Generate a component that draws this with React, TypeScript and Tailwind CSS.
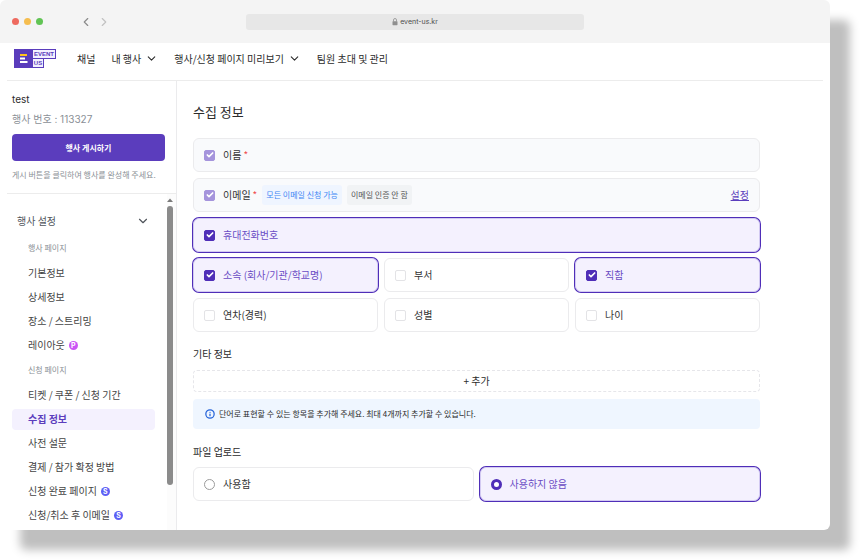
import { ReactElement, ReactNode } from 'react';
import { Check, ChevronDown, ChevronLeft, ChevronRight, Info } from 'lucide-react';

interface IMenuItem {
  name: string;
  badge?: 'P' | 'S';
  active?: boolean;
}

interface IMenuGroup {
  title: string;
  items: IMenuItem[];
}

interface IField {
  name: string;
  checked: boolean;
}

const menuGroups: IMenuGroup[] = [
  {
    title: '행사 페이지',
    items: [
      { name: '기본정보' },
      { name: '상세정보' },
      { name: '장소 / 스트리밍' },
      { name: '레이아웃', badge: 'P' },
    ],
  },
  {
    title: '신청 페이지',
    items: [
      { name: '티켓 / 쿠폰 / 신청 기간' },
      { name: '수집 정보', active: true },
      { name: '사전 설문' },
      { name: '결제 / 참가 확정 방법' },
      { name: '신청 완료 페이지', badge: 'S' },
      { name: '신청/취소 후 이메일', badge: 'S' },
    ],
  },
];

const fields: IField[] = [
  { name: '소속 (회사/기관/학교명)', checked: true },
  { name: '부서', checked: false },
  { name: '직함', checked: true },
  { name: '연차(경력)', checked: false },
  { name: '성별', checked: false },
  { name: '나이', checked: false },
];

const cardClass =
  'flex h-[34px] items-center gap-2 rounded-md border border-[#ebebed] px-[10px] text-[#333] has-enabled:has-checked:border-[#d3caf2] has-enabled:has-checked:bg-[#f4f1fe] has-enabled:has-checked:text-[#6a4cc4] has-enabled:has-checked:ring-1 has-enabled:has-checked:ring-[#4f2eb8] has-disabled:bg-[#f9fafc]';

const Logo = (): ReactElement => (
  <svg width="42" height="19" viewBox="0 0 42 19" aria-label="EVENT US">
    <path d="M0 0H42V10H30V19H0Z" fill="#5a3cbc" />
    <path d="M19 1H41V9H19ZM19 10H29V18H19Z" fill="#f3f0ff" />
    <path d="M6 5H13V7H6Z" fill="#ffc21c" />
    <path d="M6 8.5H11V10.5H6ZM6 12H13.5V14H6Z" fill="#fff" />
    <g
      fill="#5a3cbc"
      fontFamily="'Liberation Sans', sans-serif"
      fontWeight="700"
      fontSize="6"
    >
      <text x="30" y="7.2" textAnchor="middle">
        EVENT
      </text>
      <text x="24" y="16.2" textAnchor="middle">
        US
      </text>
    </g>
  </svg>
);

const LockIcon = (): ReactElement => (
  <svg width="6" height="8" viewBox="0 0 6 8">
    <path d="M1.5 3.5V2a1.5 1.5 0 0 1 3 0V3.5" fill="none" stroke="#8f8f8f" strokeWidth="0.8" />
    <rect x="0.5" y="3.2" width="5" height="4" rx="0.6" fill="#8f8f8f" />
  </svg>
);

const Checkbox = ({ checked, disabled }: { checked: boolean; disabled?: boolean }): ReactElement => (
  <span className="grid place-items-center">
    <input
      type="checkbox"
      defaultChecked={checked}
      disabled={disabled}
      className="peer col-start-1 row-start-1 size-[11px] appearance-none rounded-[2px] border border-[#e3e3e6] bg-white checked:border-[#4f2eb8] checked:bg-[#4f2eb8] disabled:border-[#a594dc] disabled:bg-[#a594dc]"
    />
    <Check
      size={8}
      strokeWidth={5}
      className="pointer-events-none col-start-1 row-start-1 text-white opacity-0 peer-checked:opacity-100"
    />
  </span>
);

const RadioCard = ({ checked, children }: { checked: boolean; children: ReactNode }): ReactElement => (
  <label className={cardClass}>
    <input
      type="radio"
      name="upload"
      defaultChecked={checked}
      className="size-[11px] appearance-none rounded-full border border-[#9b9b9b] bg-white checked:border-[3px] checked:border-[#4f2eb8]"
    />
    {children}
  </label>
);

const BrowserBar = (): ReactElement => (
  <div className="flex h-[43px] items-center bg-[#f4f4f4] px-3">
    <div className="flex flex-1 items-center">
      <div className="flex gap-[5px]">
        <span className="size-[7px] rounded-full bg-[#ee6a5f]" />
        <span className="size-[7px] rounded-full bg-[#f5bd4f]" />
        <span className="size-[7px] rounded-full bg-[#61c454]" />
      </div>
      <div className="flex gap-1 pl-9">
        <button type="button" aria-label="뒤로">
          <ChevronLeft size={14} strokeWidth={2} className="text-[#8b8b8b]" />
        </button>
        <button type="button" aria-label="앞으로">
          <ChevronRight size={14} strokeWidth={2} className="text-[#c2c2c2]" />
        </button>
      </div>
    </div>
    <div className="flex h-4 w-[42%] items-center justify-center gap-[2px] rounded-[3px] bg-[#e7e7e7] font-['Inter',sans-serif] text-[7px] text-[#4d4d4d]">
      <LockIcon />
      event-us.kr
    </div>
    <div className="flex-1" />
  </div>
);

const Header = (): ReactElement => (
  <header className="mx-[7px] flex h-[38px] items-center border-b border-[#ececec] pb-[6px] pl-[7px]">
    <a href="#home">
      <Logo />
    </a>
    <nav className="flex items-center gap-4 pl-[21px]">
      <a href="#channel">채널</a>
      <button type="button" className="flex items-center gap-1">
        내 행사
        <ChevronDown size={13} />
      </button>
      <button type="button" className="flex items-center gap-1">
        행사/신청 페이지 미리보기
        <ChevronDown size={13} />
      </button>
      <a href="#team">팀원 초대 및 관리</a>
    </nav>
  </header>
);

const Sidebar = (): ReactElement => (
  <aside className="flex w-[177px] shrink-0 flex-col border-r border-[#ebebed] pl-[7px]">
    <div className="border-b border-[#ececec] pt-2 pr-[11px] pb-2 pl-[5px]">
      <p className="font-['Inter','Noto_Sans_CJK_KR',sans-serif] leading-5">test</p>
      <p className="font-['Inter','Noto_Sans_CJK_KR',sans-serif] leading-5 text-[#8a8f96]">
        행사 번호 : 113327
      </p>
      <button
        type="button"
        className="mt-[5px] h-[27px] w-full rounded-[4px] bg-[#5b3dbd] text-[8px] font-bold text-white"
      >
        행사 게시하기
      </button>
      <p className="mt-1 text-[8px] leading-5 whitespace-nowrap text-[#8a8f96]">
        게시 버튼을 클릭하여 행사를 완성해 주세요.
      </p>
    </div>
    <div className="flex flex-1">
      <nav className="flex-1 pt-3 pb-[3px] pl-[5px]">
        <button
          type="button"
          className="flex h-[29px] w-full items-center justify-between pr-[17px] pl-[5px] text-[#50555c]"
        >
          행사 설정
          <ChevronDown size={14} />
        </button>
        {menuGroups.map((group: IMenuGroup) => (
          <section key={group.title}>
            <h3 className="pl-4 text-[8px] leading-[26px] text-[#8a8f96]">{group.title}</h3>
            <ul>
              {group.items.map((item: IMenuItem) => (
                <li key={item.name} className="flex h-6 items-center pr-3">
                  <a
                    href="#menu"
                    className={`flex h-[21px] flex-1 items-center gap-1 rounded-[4px] pl-4 whitespace-nowrap ${
                      item.active ? 'bg-[#f4f1fe] font-bold text-[#5b3dbd]' : 'text-[#444]'
                    }`}
                  >
                    {item.name}
                    {item.badge && (
                      <span
                        className={`flex size-[9px] items-center justify-center rounded-full font-['Inter',sans-serif] text-[7px] leading-none font-bold text-white ${
                          item.badge === 'P' ? 'bg-[#cb55f5]' : 'bg-[#5d5ff5]'
                        }`}
                      >
                        {item.badge}
                      </span>
                    )}
                  </a>
                </li>
              ))}
            </ul>
          </section>
        ))}
      </nav>
      <div className="flex w-[9px] flex-col items-start bg-[#fcfcfc] pt-1">
        <svg width="6" height="4" viewBox="0 0 6 4">
          <path d="M0 4L3 0.5L6 4Z" fill="#7b7b7b" />
        </svg>
        <div className="mt-1 mb-[45px] w-[6px] flex-1 rounded-full bg-[#8b8b8b]" />
      </div>
    </div>
  </aside>
);

const CollectForm = (): ReactElement => (
  <main className="min-w-0 flex-1 pt-5 pr-[70px] pb-7 pl-4">
    <h1 className="text-[13px] leading-[22px]">수집 정보</h1>
    <div className="mt-[15px] flex flex-col gap-[6px]">
      <label className={cardClass}>
        <Checkbox checked disabled />
        <span className="flex gap-[2px]">
          이름 <span className="text-[#f04c4c]">*</span>
        </span>
      </label>
      <div className={cardClass}>
        <label className="flex items-center gap-2">
          <Checkbox checked disabled />
          <span className="flex gap-[2px]">
            이메일 <span className="text-[#f04c4c]">*</span>
          </span>
        </label>
        <span className="-ml-[3px] rounded-[3px] bg-[#eff5ff] px-1 text-[8px] leading-5 text-[#3f86f4]">
          모든 이메일 신청 가능
        </span>
        <span className="-ml-[3px] rounded-[3px] bg-[#f1f3f5] px-1 text-[8px] leading-5 text-[#555]">
          이메일 인증 안 함
        </span>
        <a href="#settings" className="ml-auto text-[#5b3dbd] underline underline-offset-1">
          설정
        </a>
      </div>
      <label className={cardClass}>
        <Checkbox checked />
        휴대전화번호
      </label>
      <div className="grid grid-cols-3 gap-[6px]">
        {fields.map((field: IField) => (
          <label key={field.name} className={cardClass}>
            <Checkbox checked={field.checked} />
            {field.name}
          </label>
        ))}
      </div>
    </div>

    <h2 className="mt-3 leading-5">기타 정보</h2>
    <button
      type="button"
      className="mt-[6px] h-[22px] w-full rounded-[4px] border border-dashed border-[#e6e6ea]"
    >
      + 추가
    </button>
    <p className="mt-[7px] flex h-[30px] items-center gap-1 rounded-[4px] bg-[#eff6ff] px-3 text-[8px]">
      <Info size={10} strokeWidth={3} className="text-[#2563d9]" />
      단어로 표현할 수 있는 항목을 추가해 주세요. 최대 4개까지 추가할 수 있습니다.
    </p>

    <fieldset className="mt-[13px]">
      <legend className="leading-5">파일 업로드</legend>
      <div className="mt-[5px] grid grid-cols-2 gap-[6px]">
        <RadioCard checked={false}>사용함</RadioCard>
        <RadioCard checked>사용하지 않음</RadioCard>
      </div>
    </fieldset>
  </main>
);

export default function App(): ReactElement {
  return (
    <div className="bg-white pr-[30px] pb-[30px] font-['Noto_Sans_CJK_KR',sans-serif] text-[10px] leading-4 text-[#2b2b2b]">
      <div className="overflow-hidden rounded-md bg-white shadow-[20px_20px_10px_#bfbfbf]">
        <BrowserBar />
        <Header />
        <div className="flex">
          <Sidebar />
          <CollectForm />
        </div>
      </div>
    </div>
  );
}
